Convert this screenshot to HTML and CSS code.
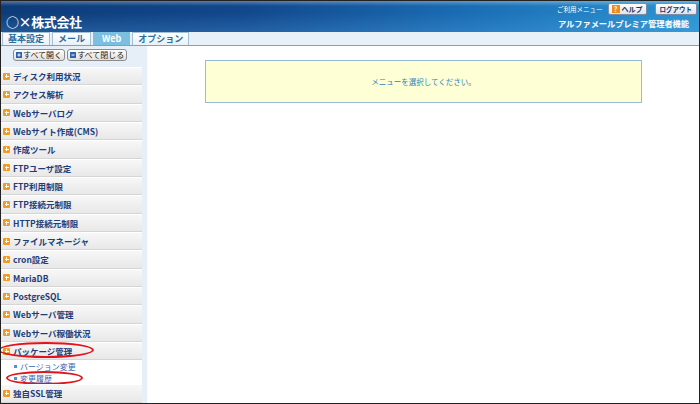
FILE: index.html
```html
<!DOCTYPE html>
<html lang="ja">
<head>
  <meta charset="UTF-8" />
  <title>アルファメールプレミア管理者機能</title>
  <link rel="stylesheet" href="styles.css">
</head>
<body>
  <div class="frame">
    <header class="topbar">
      <div class="logo">○×株式会社</div>
      <div class="topbar-right">
        <div class="usermenu">
          <span class="usermenu-label">ご利用メニュー</span>
          <a href="#" class="hbtn"><span class="help-icon">?</span>ヘルプ</a>
          <a href="#" class="hbtn hbtn-logout">ログアウト</a>
        </div>
        <div class="sysname">アルファメールプレミア管理者機能</div>
      </div>
    </header>

    <nav class="tabs">
      <a href="#" class="tab">基本設定</a>
      <a href="#" class="tab">メール</a>
      <a href="#" class="tab active">Web</a>
      <a href="#" class="tab">オプション</a>
    </nav>

    <div class="content">
      <aside class="sidebar">
        <div class="toggle-btns">
          <button class="tbtn">
            <svg width="6" height="6" viewBox="0 0 6 6"><rect width="6" height="6" fill="#2f64ab"/><path d="M1.5 3h3M3 1.5v3" stroke="#fff" stroke-width="1"/></svg>
            すべて開く
          </button>
          <button class="tbtn">
            <svg width="6" height="6" viewBox="0 0 6 6"><rect width="6" height="6" fill="#2f64ab"/><path d="M1.5 3h3" stroke="#fff" stroke-width="1"/></svg>
            すべて閉じる
          </button>
        </div>

        <ul class="menu">
          <li class="menu-item"><span class="plus"></span>ディスク利用状況</li>
          <li class="menu-item"><span class="plus"></span>アクセス解析</li>
          <li class="menu-item"><span class="plus"></span>Webサーバログ</li>
          <li class="menu-item"><span class="plus"></span>Webサイト作成(CMS)</li>
          <li class="menu-item"><span class="plus"></span>作成ツール</li>
          <li class="menu-item"><span class="plus"></span>FTPユーザ設定</li>
          <li class="menu-item"><span class="plus"></span>FTP利用制限</li>
          <li class="menu-item"><span class="plus"></span>FTP接続元制限</li>
          <li class="menu-item"><span class="plus"></span>HTTP接続元制限</li>
          <li class="menu-item"><span class="plus"></span>ファイルマネージャ</li>
          <li class="menu-item"><span class="plus"></span>cron設定</li>
          <li class="menu-item"><span class="plus"></span>MariaDB</li>
          <li class="menu-item"><span class="plus"></span>PostgreSQL</li>
          <li class="menu-item"><span class="plus"></span>Webサーバ管理</li>
          <li class="menu-item"><span class="plus"></span>Webサーバ稼働状況</li>
          <li class="menu-item"><span class="plus"></span>パッケージ管理<span class="mark mark-pkg"></span></li>
          <li>
            <ul class="submenu">
              <li class="sub-item"><a href="#">バージョン変更</a></li>
              <li class="sub-item"><a href="#">変更履歴</a><span class="mark mark-history"></span></li>
            </ul>
          </li>
          <li class="menu-item"><span class="plus"></span>独自SSL管理</li>
        </ul>
      </aside>

      <main class="main">
        <div class="notice">メニューを選択してください。</div>
      </main>
    </div>
  </div>
</body>
</html>
```

FILE: styles.css
```css
body { margin: 0; font-family: "Noto Sans CJK JP", "Liberation Sans", sans-serif; background: #fff; }
a { text-decoration: none; color: inherit; }

.frame {
  width: 700px; height: 404px; box-sizing: border-box;
  border: 1px solid #222; overflow: hidden;
  display: flex; flex-direction: column;
}

/* header */
.topbar {
  height: 31px; flex: none; box-sizing: border-box;
  display: flex; justify-content: space-between;
  padding: 0 2px 0 5px; color: #fff;
  background:
    linear-gradient(180deg, rgba(255,255,255,0.3) 0, rgba(255,255,255,0) 5px, rgba(255,255,255,0) 12px, rgba(90,170,235,0.25) 100%),
    linear-gradient(90deg, #0d3b78 0%, #12488c 35%, #1a6bb2 65%, #2b95d2 100%);
}
.logo { align-self: flex-end; font-size: 13px; font-weight: bold; line-height: 13px; padding-bottom: 4px; letter-spacing: -0.4px; }
.topbar-right { display: flex; flex-direction: column; align-items: flex-end; padding-top: 2px; }
.usermenu { display: flex; align-items: center; height: 12px; }
.usermenu-label { font-size: 6.5px; margin-right: 5px; }
.hbtn {
  display: flex; align-items: center; gap: 2px;
  height: 12px; box-sizing: border-box; padding: 0 3px;
  border: 1px solid #7c8da5; border-radius: 2px;
  background: linear-gradient(#ffffff, #dde4ec);
  color: #1b3160; font-size: 7px; font-weight: bold; line-height: 10px;
}
.hbtn-logout { margin-left: 8px; font-size: 6.5px; padding: 0 4px; }
.help-icon {
  width: 8px; height: 8px; background: #ef8d1c; color: #fff;
  font-size: 7px; line-height: 8px; text-align: center; font-weight: bold;
}
.sysname { font-size: 8.3px; font-weight: bold; line-height: 10px; margin: 3px 8px 0 0; letter-spacing: -0.1px; }

/* tabs */
.tabs {
  height: 14px; flex: none; box-sizing: border-box;
  display: flex; gap: 2px; padding-left: 1px;
  background: #e8f0f8; border-bottom: 1px solid #6aa8d4;
}
.tab {
  padding: 0 5px; border: 1px solid #a4c0d6; border-bottom: none;
  background: linear-gradient(#ffffff, #eaf0f5);
  color: #2a6e9e; font-size: 9px; font-weight: bold; line-height: 12px;
}
.tab.active { background: #7dbfe0; color: #fff; border-color: #7dbfe0; padding: 0 8px; }

/* layout */
.content { flex: 1; display: flex; min-height: 0; }
.sidebar { width: 146px; flex: none; background: #e6eff8; padding-right: 5px; box-sizing: border-box; }
.main { flex: 1; background: #fff; }

.toggle-btns { display: flex; gap: 2px; padding: 3px 0 0 12px; height: 21px; box-sizing: border-box; }
.tbtn {
  display: flex; align-items: center; gap: 1px;
  height: 12px; box-sizing: border-box; padding: 0 2px; margin: 0;
  border: 1px solid #8c8c8c; border-radius: 3px;
  background: linear-gradient(#fdfdfd, #e0e0e0);
  font-family: inherit; font-size: 8px; color: #222; line-height: 10px;
}

/* menu */
.menu { list-style: none; margin: 0; padding: 0; }
.menu-item {
  position: relative; height: 18.33px; box-sizing: border-box;
  display: flex; align-items: center; gap: 3px; padding-left: 2px;
  border-top: 1px solid #fff; border-bottom: 1px solid #d5d5d5;
  background: linear-gradient(#f7f7f7, #e8e8e8);
  color: #1d3e7a; font-size: 8.5px; font-weight: bold; white-space: nowrap;
}
.plus {
  position: relative; width: 7px; height: 7px; flex: none;
  background: #f29a22; border-radius: 1px;
}
.plus::before, .plus::after { content: ""; position: absolute; background: #fff; }
.plus::before { left: 1.5px; top: 3px; width: 4px; height: 1px; }
.plus::after { left: 3px; top: 1.5px; width: 1px; height: 4px; }

.submenu { list-style: none; margin: 0; padding: 0; background: #fff; }
.sub-item {
  position: relative; height: 12px; display: flex; align-items: center;
  padding-left: 13px; font-size: 8px; color: #3568b0;
}
.sub-item::before {
  content: ""; width: 3px; height: 3px; background: #4a92d2; margin-right: 3px;
}

/* red annotation marks */
.mark { position: absolute; box-sizing: border-box; border: 2.5px solid #e3121b; border-radius: 50%; }
.mark-pkg { left: -3px; top: -1px; width: 96px; height: 16px; }
.mark-history { left: 5px; top: -1px; width: 77px; height: 14px; }

/* content */
.notice {
  margin: 14px 57px 0 58px; height: 43px; box-sizing: border-box;
  border: 1px solid #95bcd4; background: #ffffd6;
  display: flex; align-items: center; justify-content: center;
  font-size: 7.5px; color: #2f7fbe;
}
```
